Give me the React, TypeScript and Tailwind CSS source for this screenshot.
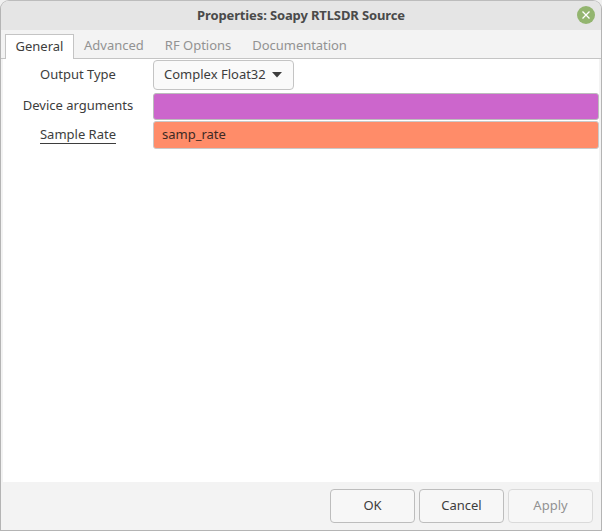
import React from 'react';

const Row = ({ label, underline, children, className }: { label: string; underline?: boolean; children: React.ReactNode; className: string }) => (
  <div className={`flex ${className}`}>
    <div className={`w-[150px] flex items-center justify-center ${underline ? '' : 'pb-[2px]'}`}>
      <span className={underline ? 'border-b border-[#3d3d3d] leading-[17px]' : 'leading-[17px]'}>{label}</span>
    </div>
    {children}
  </div>
);

const Button = ({ label, disabled }: { label: string; disabled?: boolean }) => (
  <div
    className={`w-[85px] h-[34px] flex items-center justify-center rounded-[4px] border ${
      disabled ? 'border-[#dadada] text-[#929292]' : 'border-[#bdbdbd] text-[#3d3d3d]'
    } bg-[#f7f7f7]`}
  >
    {label}
  </div>
);

export default function App() {
  return (
    <div className="w-[602px] h-[531px] bg-[#f0f0f0] font-['Noto_Sans',sans-serif] text-[13px] text-[#3d3d3d]">
      <div className="w-full h-full flex flex-col overflow-hidden rounded-t-[9px] border border-[#b4b4b4] border-t-[#bcbcbc]">
        <div className="h-[29px] shrink-0 bg-[#e5e5e5] flex items-center justify-center relative">
          <span className="font-bold text-[#4a4a4a] tracking-[-0.13px]">Properties: Soapy RTLSDR Source</span>
          <div className="absolute right-[6px] top-[5px] w-[18px] h-[18px] rounded-full bg-[#93b56f] flex items-center justify-center">
            <svg width="10" height="10" viewBox="0 0 10 10" stroke="#ffffff" strokeWidth="1.3" fill="none">
              <path d="M1.5 1.5 L8.5 8.5 M8.5 1.5 L1.5 8.5" />
            </svg>
          </div>
        </div>

        <div className="flex-1 flex flex-col bg-[#f3f3f3] min-h-0">
          <div className="h-[29px] shrink-0 flex items-end pl-[4px] border-b border-[#c4c4c4]">
            <div className="w-[69px] h-[25px] -mb-px bg-white border border-b-0 border-[#c4c4c4] flex items-center justify-center">General</div>
            <div className="flex items-center h-[25px] text-[#929292]">
              <span className="ml-[10px]">Advanced</span>
              <span className="ml-[21px]">RF Options</span>
              <span className="ml-[21px] tracking-[-0.05px]">Documentation</span>
            </div>
          </div>

          <div className="flex-1 mx-[2px] bg-white pt-[1px]">
            <Row label="Output Type" className="h-[31px] mb-[2px]">
              <div className="w-[141px] h-[30px] flex items-center pl-[10px] gap-[6px] rounded-[4px] border border-[#c4c4c4] bg-[#fafafa]">
                Complex Float32
                <svg width="10" height="6" viewBox="0 0 10 6" fill="#3d3d3d">
                  <path d="M0 0 H10 L5 5.5 Z" />
                </svg>
              </div>
            </Row>
            <Row label="Device arguments" className="h-[27px] mb-[1px]">
              <div className="flex-1 rounded-[3px] border border-[#bcbcbc] bg-[#cc66cc]" />
            </Row>
            <Row label="Sample Rate" underline className="h-[28px]">
              <div className="flex-1 flex items-center pl-[8px] rounded-[3px] border border-[#c9c9c9] bg-[#ff8c69] text-[#3d2a24]">samp_rate</div>
            </Row>
          </div>

          <div className="h-[48px] shrink-0 flex items-center justify-end gap-[4px] pr-[8px]">
            <Button label="OK" />
            <Button label="Cancel" />
            <Button label="Apply" disabled />
          </div>
        </div>
      </div>
    </div>
  );
}
